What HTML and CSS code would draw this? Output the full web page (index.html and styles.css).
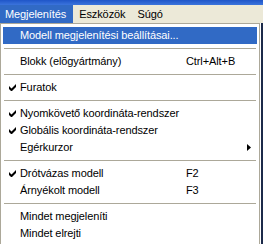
FILE: index.html
```html
<!DOCTYPE html>
<html lang="hu">
<head>
    <meta charset="UTF-8">
    <title>Megjelenítés menü</title>
    <link rel="stylesheet" href="styles.css">
</head>
<body>
    <div class="titlebar"></div>
    <div class="menubar">
        <span class="top-item active">Megjelenítés</span>
        <span class="top-item">Eszközök</span>
        <span class="top-item">Súgó</span>
    </div>
    <div class="area">
        <div class="dropdown">
            <div class="item selected"><span class="check"></span><span class="label">Modell megjelenítési beállításai...</span><span class="key"></span><span class="arrow"></span></div>
            <div class="sep"></div>
            <div class="item"><span class="check"></span><span class="label">Blokk (elõgyártmány)</span><span class="key">Ctrl+Alt+B</span><span class="arrow"></span></div>
            <div class="sep"></div>
            <div class="item"><span class="check"><svg width="7" height="7" viewBox="0 0 7 7"><path d="M0 2v3l2 2h1l4-4V0L2.5 4.5z" fill="#000"/></svg></span><span class="label">Furatok</span><span class="key"></span><span class="arrow"></span></div>
            <div class="sep"></div>
            <div class="item"><span class="check"><svg width="7" height="7" viewBox="0 0 7 7"><path d="M0 2v3l2 2h1l4-4V0L2.5 4.5z" fill="#000"/></svg></span><span class="label">Nyomkövető koordináta-rendszer</span><span class="key"></span><span class="arrow"></span></div>
            <div class="item"><span class="check"><svg width="7" height="7" viewBox="0 0 7 7"><path d="M0 2v3l2 2h1l4-4V0L2.5 4.5z" fill="#000"/></svg></span><span class="label">Globális koordináta-rendszer</span><span class="key"></span><span class="arrow"></span></div>
            <div class="item"><span class="check"></span><span class="label">Egérkurzor</span><span class="key"></span><span class="arrow"><svg width="4" height="7" viewBox="0 0 4 7"><path d="M0 0l4 3.5L0 7z" fill="#000"/></svg></span></div>
            <div class="sep"></div>
            <div class="item"><span class="check"><svg width="7" height="7" viewBox="0 0 7 7"><path d="M0 2v3l2 2h1l4-4V0L2.5 4.5z" fill="#000"/></svg></span><span class="label">Drótvázas modell</span><span class="key">F2</span><span class="arrow"></span></div>
            <div class="item"><span class="check"></span><span class="label">Árnyékolt modell</span><span class="key">F3</span><span class="arrow"></span></div>
            <div class="sep"></div>
            <div class="item"><span class="check"></span><span class="label">Mindet megjeleníti</span><span class="key"></span><span class="arrow"></span></div>
            <div class="item"><span class="check"></span><span class="label">Mindet elrejti</span><span class="key"></span><span class="arrow"></span></div>
        </div>
        <div class="behind"></div>
    </div>
</body>
</html>
```

FILE: styles.css
```css
body {
    margin: 0;
    width: 263px;
    height: 244px;
    overflow: hidden;
    font-family: "Liberation Sans", Arial, sans-serif;
    font-size: 11px;
    letter-spacing: -0.1px;
    color: #000;
    background: #fff;
}
.titlebar {
    height: 5px;
    background: linear-gradient(#1f55c8, #3b74dc);
}
.menubar {
    height: 18px;
    display: flex;
    background: #ece9d8;
    line-height: 18px;
}
.top-item {
    padding: 0 6px 0 6px;
}
.top-item:first-child {
    padding-left: 5px;
    padding-right: 7px;
}
.top-item.active {
    background: #316ac5;
    color: #fff;
}
.area {
    display: flex;
    height: 221px;
}
.dropdown {
    width: 254px;
    border: 1px solid #aca899;
    border-bottom: 0;
    padding: 3px 2px 0 2px;
    background: #fff;
}
.behind {
    flex: 1;
    background: #fff;
    border-right: 2px solid #1c2a4a;
}
.item {
    display: grid;
    grid-template-columns: 17px 166px 1fr 10px;
    height: 17px;
    line-height: 17px;
    white-space: nowrap;
}
.item.selected {
    background: #316ac5;
    color: #fff;
}
.check, .arrow {
    display: flex;
    align-items: center;
    justify-content: center;
}
.check {
    justify-content: flex-end;
    padding-right: 4px;
}
.arrow {
    justify-content: flex-start;
}
.sep {
    height: 9px;
    display: flex;
    align-items: center;
}
.sep::before {
    content: "";
    flex: 1;
    height: 1px;
    margin: 0 1px;
    background: #aca899;
}
```
